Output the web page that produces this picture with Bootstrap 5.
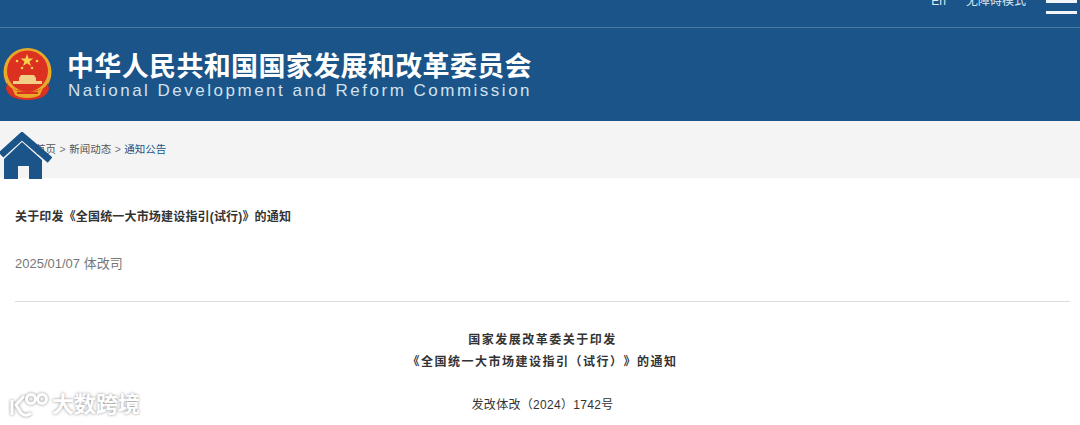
<!DOCTYPE html>
<html lang="zh">
  <head>
    <meta charset="UTF-8" />
    <meta name="viewport" content="width=device-width, initial-scale=1.0" />
    <title>关于印发《全国统一大市场建设指引(试行)》的通知</title>
    <link
      href="https://cdn.jsdelivr.net/npm/bootstrap@5.3.5/dist/css/bootstrap.min.css"
      rel="stylesheet"
    />
    <style>
      html, body { height: 425px; overflow: hidden; }
      body { font-family: "Liberation Sans", "Noto Sans CJK SC", sans-serif; background: #fff; width: 1080px; text-spacing-trim: space-all; }
      .site-head { background: #1a5488; height: 121px; color: #fff; }
      .top-strip { height: 28px; border-bottom: 1px solid #4a7ba6; overflow: hidden; padding-right: 3px; }
      .top-link { font-size: 12px; line-height: 12px; color: #dce8f3; margin-top: -5px; }
      .top-en { margin-right: 20px; }
      .top-care { margin-right: 20px; }
      .burger { width: 31px; margin-top: 1px; }
      .burger i { display: block; height: 3px; background: #f2f6fa; margin-bottom: 8px; }
      .burger i:first-child { margin-top: -1px; }
      .logo-row { padding: 20px 0 0 3px; height: 93px; }
      .emblem { width: 49px; height: 52px; margin-right: 15px; flex: none; }
      .cn-name { font-size: 27px; line-height: 32px; font-weight: 700; letter-spacing: 0.35px; color: #fff; white-space: nowrap; margin-top: 3px; }
      .en-name { font-size: 17px; line-height: 18px; letter-spacing: 2.5px; color: #d3e1ee; white-space: nowrap; margin: -1px 0 0 1px; }
      .crumb-bar { background: #f4f4f4; height: 57px; padding-left: 35px; font-size: 10.5px; color: #555; }
      .crumb-bar .sep { margin: 0 3.5px; color: #777; }
      .crumb-on { color: #1a5488; }
      .home-mark { position: absolute; left: 0; top: 132px; width: 52px; height: 47px; }
      .art-wrap { padding: 0 10px 0 15px; }
      .art-title { font-size: 12px; line-height: 18px; font-weight: 700; color: #333; margin: 30px 0 0; letter-spacing: 0.17px; }
      .art-meta { font-size: 13px; line-height: 18px; color: #777; margin: 29px 0 0; padding-bottom: 28px; border-bottom: 1px solid #dedede; }
      .art-body { font-size: 12px; line-height: 22px; color: #333; margin-top: 27px; }
      .art-body strong { letter-spacing: 1.5px; display: block; }
      .art-code { margin-top: 21px; letter-spacing: 0.3px; }
      .stamp { position: absolute; left: 8px; top: 391px; display: flex; align-items: center; color: #fff; font-size: 22px; line-height: 28px; font-weight: 700; text-shadow: 0 0 3px rgba(110,110,110,.8); }
      .stamp svg { width: 42px; height: 28px; margin-right: 2px; filter: drop-shadow(0 0 1.5px rgba(110,110,110,.8)); }
    </style>
  </head>
  <body>
    <header class="site-head">
      <div class="top-strip d-flex justify-content-end align-items-start">
        <span class="top-link top-en">En</span>
        <span class="top-link top-care">无障碍模式</span>
        <div class="burger"><i></i><i></i></div>
      </div>
      <div class="logo-row d-flex align-items-start">
        <svg class="emblem" viewBox="0 0 49 52">
          <circle cx="24.5" cy="24" r="24" fill="#e8a92a" />
          <circle cx="24.5" cy="23" r="20.5" fill="#dc3020" />
          <polygon points="24,6 25.6,10.6 30.4,10.6 26.5,13.5 28,18 24,15.2 20,18 21.5,13.5 17.6,10.6 22.4,10.6" fill="#f6d24c" />
          <circle cx="14" cy="13" r="1.3" fill="#f6d24c" />
          <circle cx="34" cy="13" r="1.3" fill="#f6d24c" />
          <circle cx="19" cy="20" r="1.3" fill="#f6d24c" />
          <circle cx="29" cy="20" r="1.3" fill="#f6d24c" />
          <path d="M18 27h13l2 3v3H16v-3z" fill="#f2cf86" />
          <rect x="10" y="33" width="29" height="3" fill="#f2cf86" />
          <path d="M4 35c3 6 9 8 20.500 8S42 41 45 35l1 6c-2 7-9 11-21.500 11S5 48 3 41z" fill="#dc3020" />
          <path d="M9 40c4 3 9 4 15.500 4S36 43 40 40l-3 7c-3 2-7 3-12.500 3S15 49 12 47z" fill="#e8a92a" />
          <path d="M14 44h21v2H14z" fill="#dc3020" />
        </svg>
        <div>
          <div class="cn-name">中华人民共和国国家发展和改革委员会</div>
          <div class="en-name">National Development and Reform Commission</div>
        </div>
      </div>
    </header>

    <nav class="crumb-bar d-flex align-items-center">
      <span>首页</span><span class="sep">&gt;</span><span>新闻动态</span><span class="sep">&gt;</span><span class="crumb-on">通知公告</span>
    </nav>
    <svg class="home-mark" viewBox="0 0 52 47">
      <path d="M1 23 22 4 50 28" fill="none" stroke="#1a5488" stroke-width="7" />
      <path d="M4 27 22 10 42 28V47H29V34H18V47H4z" fill="#1a5488" />
    </svg>

    <main class="art-wrap">
      <h1 class="art-title">关于印发《全国统一大市场建设指引(试行)》的通知</h1>
      <p class="art-meta">2025/01/07 体改司</p>
      <div class="art-body text-center">
        <strong>国家发展改革委关于印发</strong>
        <strong>《全国统一大市场建设指引（试行）》的通知</strong>
        <p class="art-code">发改体改（2024）1742号</p>
      </div>
    </main>

    <div class="stamp">
      <svg viewBox="0 0 42 28" fill="none" stroke="#fff" stroke-width="3">
        <path d="M4 9v15" />
        <path d="M16 5 8 14l5 8c3 3 7 3 10 0" />
        <circle cx="23" cy="8" r="4.500" />
        <circle cx="34" cy="8" r="4.500" />
      </svg>
      <span>大数跨境</span>
    </div>
  </body>
</html>
